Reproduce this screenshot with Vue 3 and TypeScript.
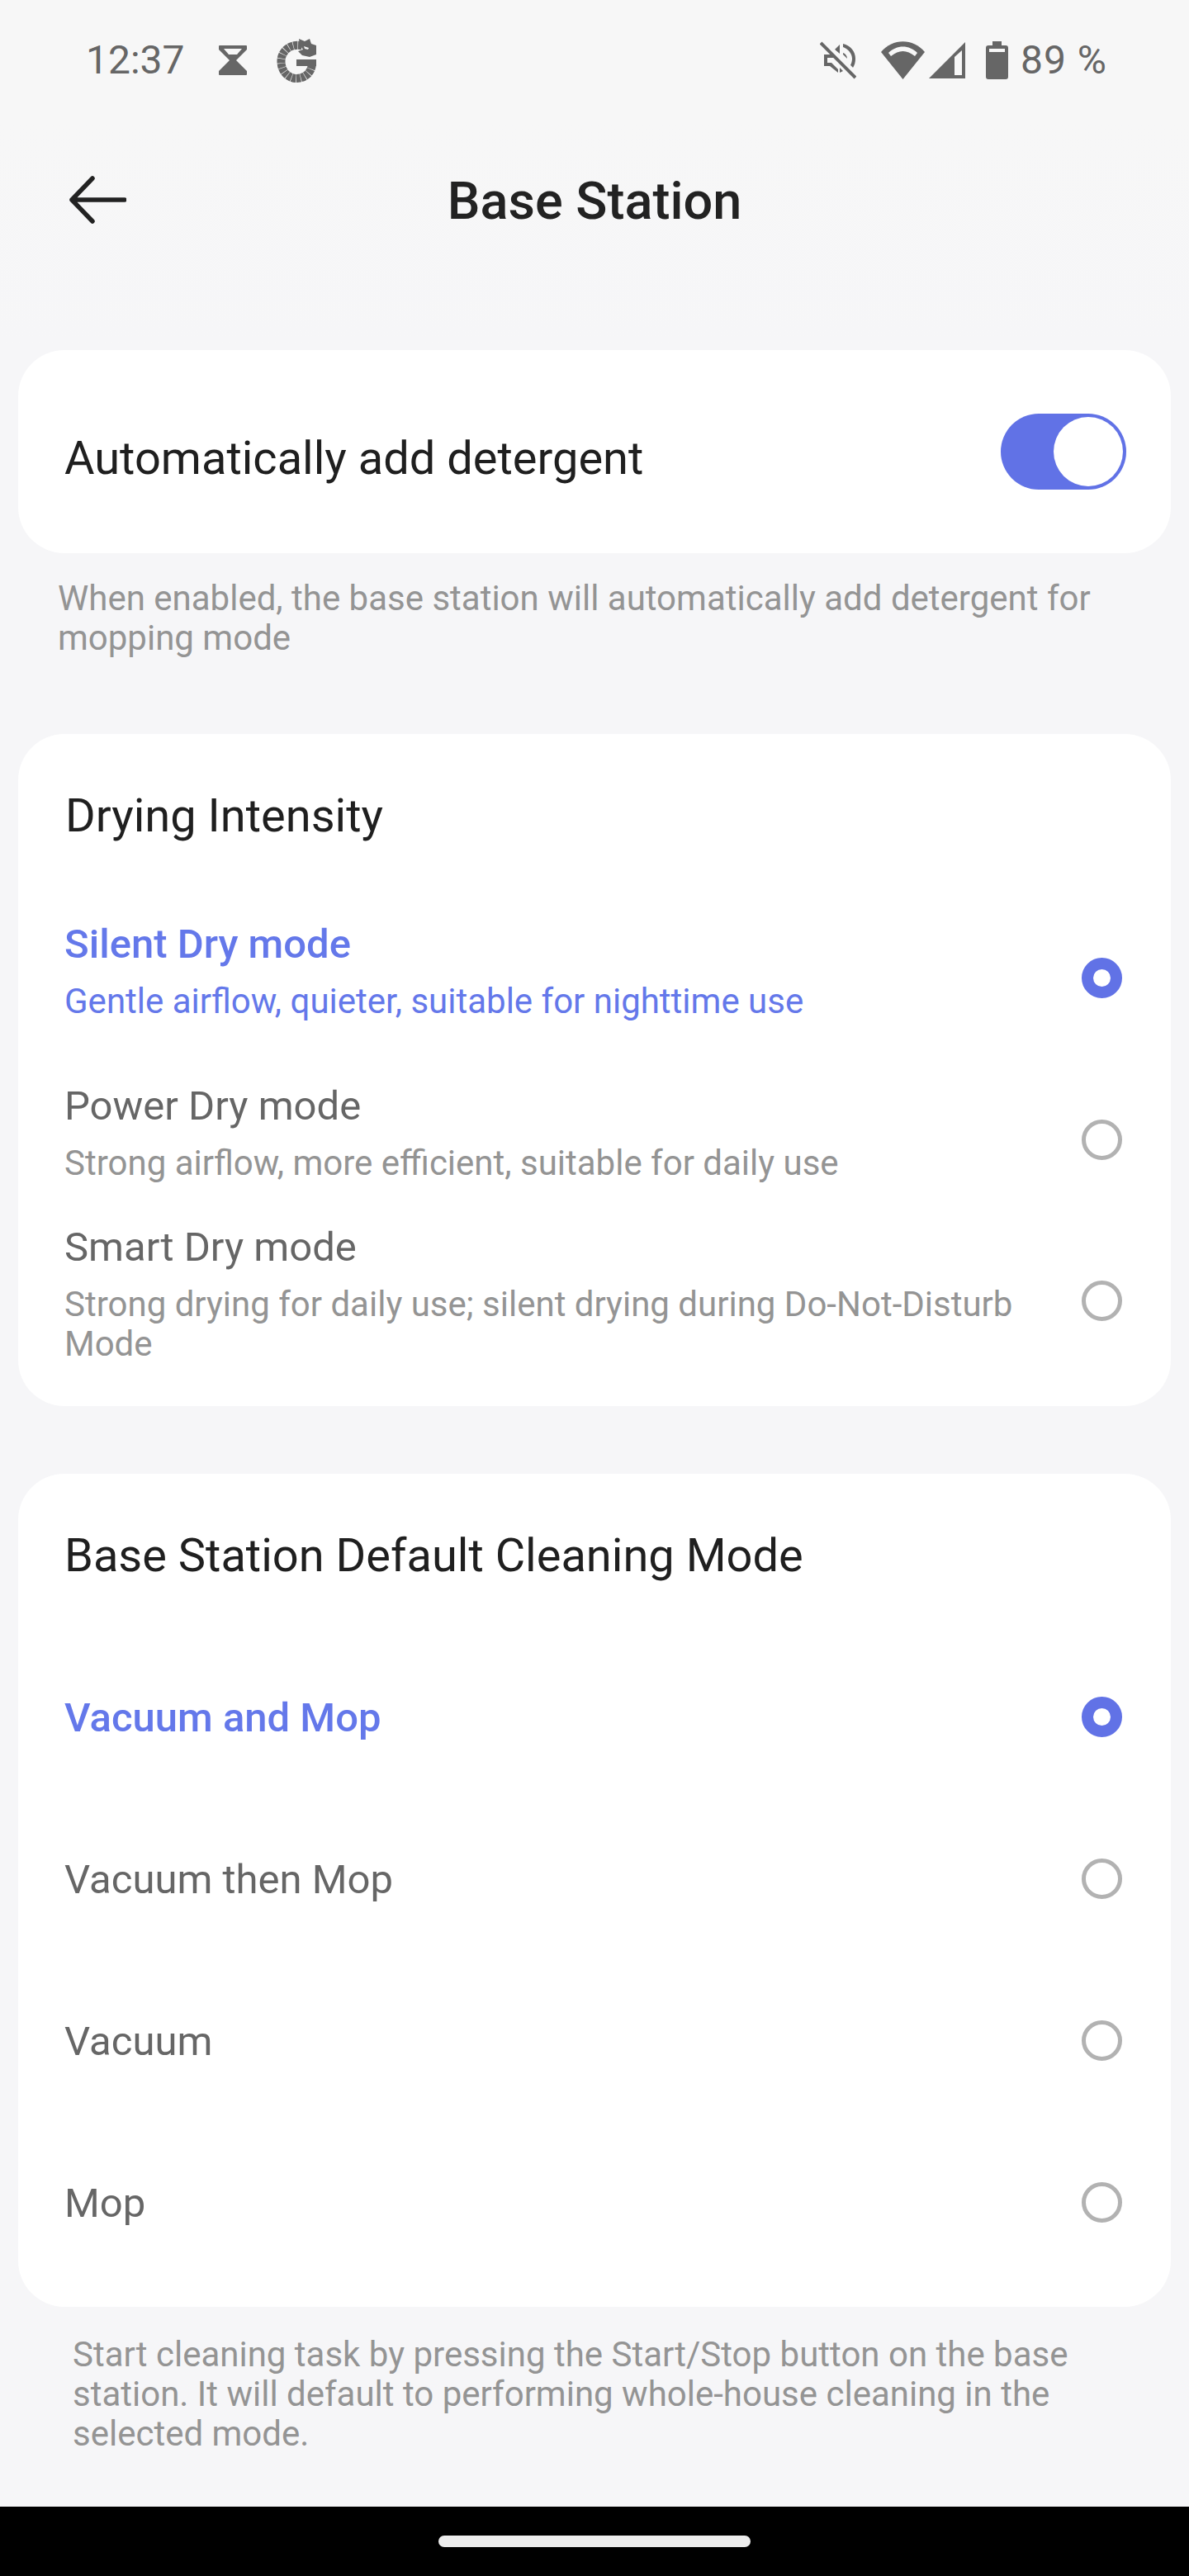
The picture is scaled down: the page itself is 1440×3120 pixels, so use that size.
<script setup lang="ts">
const dryModes = [
  { title: 'Silent Dry mode', desc: 'Gentle airflow, quieter, suitable for nighttime use', active: true },
  { title: 'Power Dry mode', desc: 'Strong airflow, more efficient, suitable for daily use', active: false },
  { title: 'Smart Dry mode', desc: 'Strong drying for daily use; silent drying during Do-Not-Disturb Mode', active: false }
]

const cleanModes = [
  { title: 'Vacuum and Mop', active: true },
  { title: 'Vacuum then Mop', active: false },
  { title: 'Vacuum', active: false },
  { title: 'Mop', active: false }
]
</script>

<template>
  <div class="screen">
    <div class="status-bar">
      <div class="status-left">
        <span class="clock">12:37</span>
        <svg class="ico-hourglass" viewBox="0 0 34 36" width="34" height="36">
          <path fill="#666" d="M1 0h32a1 1 0 0 1 1 1v4L21 18l13 13v4a1 1 0 0 1-1 1H1a1 1 0 0 1-1-1v-4l13-13L0 5V1a1 1 0 0 1 1-1z" />
          <path fill="#f7f7f7" d="M6 4h22l-6 7H12z" />
        </svg>
        <svg class="ico-g" viewBox="0 0 50 54" width="50" height="54">
          <path fill="none" stroke="#666" stroke-width="10" stroke-dasharray="5 0.6" d="M31 9.500C17 6 5 16 5.500 29c.5 13 10 20 18.500 20 10 0 19-7 19-19" />
          <path fill="#666" d="M24 26h24v8H24z" />
          <path fill="#666" d="M27 1l7 3 6-3 2 6 6 2v11l-8 3-9-2-5-5 6-2-4-6z" />
          <path fill="#f7f7f7" d="M33 10l6 2-1 2-4-1z" />
        </svg>
      </div>
      <div class="status-right">
        <svg viewBox="0 0 44 48" width="44" height="48">
          <g fill="#666">
            <path d="M5 17h9l4 4H9v6h5l8 8v4L12 31H5z" />
            <path d="M24 5v11l-6-5z" />
            <path d="M24 33l4 4-4 2z" />
            <path d="M28 4c9 2 15 9 15 18 0 4-1 8-3 11l-3-3c1-2 2-5 2-8 0-6-5-12-11-14z" />
            <path d="M28 15c3 1 5 4 5 7l-5-5z" />
          </g>
          <path stroke="#f7f7f7" stroke-width="4" d="M5 1l42 42" />
          <path stroke="#666" stroke-width="4" d="M1 3l42 42" />
        </svg>
        <svg class="ico-wifi" viewBox="0 0 53 46" width="53" height="46">
          <path fill="#666" d="M0 13C14-4 39-4 53 13L26.500 46z" />
          <path fill="#f7f7f7" d="M9 14C19 4 34 4 44 14l-3 4C31 10 22 10 12 18z" />
        </svg>
        <svg class="ico-signal" viewBox="0 0 44 44" width="44" height="44">
          <path fill="#666" d="M44 0v44H0z" />
          <path fill="#f7f7f7" d="M31 18l9-8v30h-9z" />
        </svg>
        <svg class="ico-battery" viewBox="0 0 27 46" width="27" height="46">
          <path fill="#666" d="M8 0h11v5h5a3 3 0 0 1 3 3v35a3 3 0 0 1-3 3H3a3 3 0 0 1-3-3V8a3 3 0 0 1 3-3h5z" />
          <path fill="#f7f7f7" d="M4 9h19v4H4z" />
        </svg>
        <span class="battery">89 %</span>
      </div>
    </div>

    <header class="top-bar">
      <svg class="back" viewBox="0 0 70 58" width="70" height="58">
        <path fill="none" stroke="#222" stroke-width="5.500" stroke-linecap="round" stroke-linejoin="round" d="M29 3L4 29l25 26M4 29h64" />
      </svg>
      <h1 class="title">Base Station</h1>
    </header>

    <section class="card card-toggle">
      <span class="toggle-label">Automatically add detergent</span>
      <span class="switch"><span class="knob"></span></span>
    </section>
    <p class="note note-first">When enabled, the base station will automatically add detergent for mopping mode</p>

    <section class="card card-dry">
      <h2 class="card-title">Drying Intensity</h2>
      <div v-for="mode in dryModes" :key="mode.title" class="dry-row" :class="{ active: mode.active }">
        <div class="dry-text">
          <div class="row-title">{{ mode.title }}</div>
          <div class="row-desc">{{ mode.desc }}</div>
        </div>
        <span class="radio" :class="{ on: mode.active }"></span>
      </div>
    </section>

    <section class="card card-clean">
      <h2 class="card-title">Base Station Default Cleaning Mode</h2>
      <div v-for="mode in cleanModes" :key="mode.title" class="clean-row" :class="{ active: mode.active }">
        <span class="row-title">{{ mode.title }}</span>
        <span class="radio" :class="{ on: mode.active }"></span>
      </div>
    </section>
    <p class="note note-last">Start cleaning task by pressing the Start/Stop button on the base station. It will default to performing whole-house cleaning in the selected mode.</p>

    <div class="nav-bar"><span class="home-pill"></span></div>
  </div>
</template>

<style>
html, body { margin: 0; background: #f6f6f8; }
</style>

<style scoped>
.screen {
  width: 1440px;
  height: 3120px;
  background: #f6f6f8;
  font-family: Roboto, "Liberation Sans", sans-serif;
  display: flex;
  flex-direction: column;
  overflow: hidden;
}

.status-bar {
  height: 146px;
  padding: 46px 99px 0 104px;
  box-sizing: border-box;
  display: flex;
  justify-content: space-between;
  align-items: flex-start;
  background: #f7f7f7;
}
.status-left { display: flex; align-items: center; height: 54px; }
.clock { font-size: 48px; color: #666; line-height: 54px; width: 161px; }
.ico-hourglass { margin-right: 36px; }
.status-right { display: flex; align-items: center; height: 54px; }
.ico-wifi { margin-left: 30px; }
.ico-signal { margin-left: 5px; }
.ico-battery { margin-left: 25px; }
.battery { font-size: 48px; letter-spacing: 1px; color: #666; line-height: 54px; margin-left: 15px; }

.top-bar {
  height: 278px;
  box-sizing: border-box;
  padding: 65px 0 0 83px;
  display: grid;
  grid-template-columns: 1fr auto 1fr;
  align-items: start;
  background: linear-gradient(#f7f7f7, #f6f6f8);
}
.back { margin-top: 2px; }
.title {
  margin: 1px 0 0 -83px;
  font-size: 63px;
  font-weight: 500;
  color: #222;
  line-height: 64px;
}

.card {
  margin: 0 22px;
  background: #fff;
  border-radius: 56px;
}
.card-toggle {
  height: 246px;
  padding: 0 54px 0 56px;
  display: flex;
  align-items: center;
  justify-content: space-between;
}
.toggle-label { font-size: 56px; color: #1f1f1f; padding-top: 15px; }
.switch {
  width: 152px;
  height: 92px;
  border-radius: 46px;
  background: #6172e6;
  position: relative;
  display: block;
}
.knob {
  position: absolute;
  right: 4px;
  top: 4px;
  width: 84px;
  height: 84px;
  border-radius: 50%;
  background: #fff;
}

.note {
  margin: 0;
  font-size: 42px;
  line-height: 48px;
  color: #949494;
}
.note-first { padding: 31px 100px 0 70px; height: 219px; box-sizing: border-box; }
.note-last { padding: 34px 100px 0 88px; }

.card-dry { padding: 0 58px 27px 56px; }
.card-title {
  margin: 0;
  font-size: 56px;
  font-weight: 400;
  color: #1f1f1f;
  line-height: 64px;
  padding-top: 67px;
}
.card-dry .card-title { margin: 0 0 70px 1px; }

.dry-row {
  display: flex;
  align-items: center;
  justify-content: space-between;
  padding: 24px 0;
}
.dry-row.active { margin-bottom: 25px; }
.dry-text { width: 1180px; }
.row-title { font-size: 49px; line-height: 60px; color: #666; }
.row-desc { font-size: 42px; line-height: 48px; color: #949494; margin-top: 15px; }
.dry-row.active .row-title { color: #6478ea; font-weight: 500; }
.dry-row.active .row-desc { color: #6478ea; }
.dry-row .radio { margin-top: 18px; }

.radio {
  width: 49px;
  height: 49px;
  border-radius: 50%;
  box-sizing: border-box;
  border: 5px solid #b2b2b2;
  background: #fff;
  flex: none;
  margin-right: 1px;
}
.radio.on { border: 14px solid #6172e6; }

.card-clean { margin-top: 82px; padding: 0 58px 29px 56px; }
.card-clean .card-title { margin-bottom: 65px; }
.clean-row {
  height: 196px;
  display: flex;
  align-items: center;
  justify-content: space-between;
}
.clean-row .row-title { padding-top: 3px; }
.clean-row.active .row-title { color: #6478ea; font-weight: 500; }

.nav-bar {
  height: 84px;
  width: 1440px;
  background: #000;
  display: flex;
  justify-content: center;
  padding-top: 35px;
  box-sizing: border-box;
  margin-top: auto;
}
.home-pill { width: 378px; height: 14px; border-radius: 7px; background: #ededed; }
</style>
